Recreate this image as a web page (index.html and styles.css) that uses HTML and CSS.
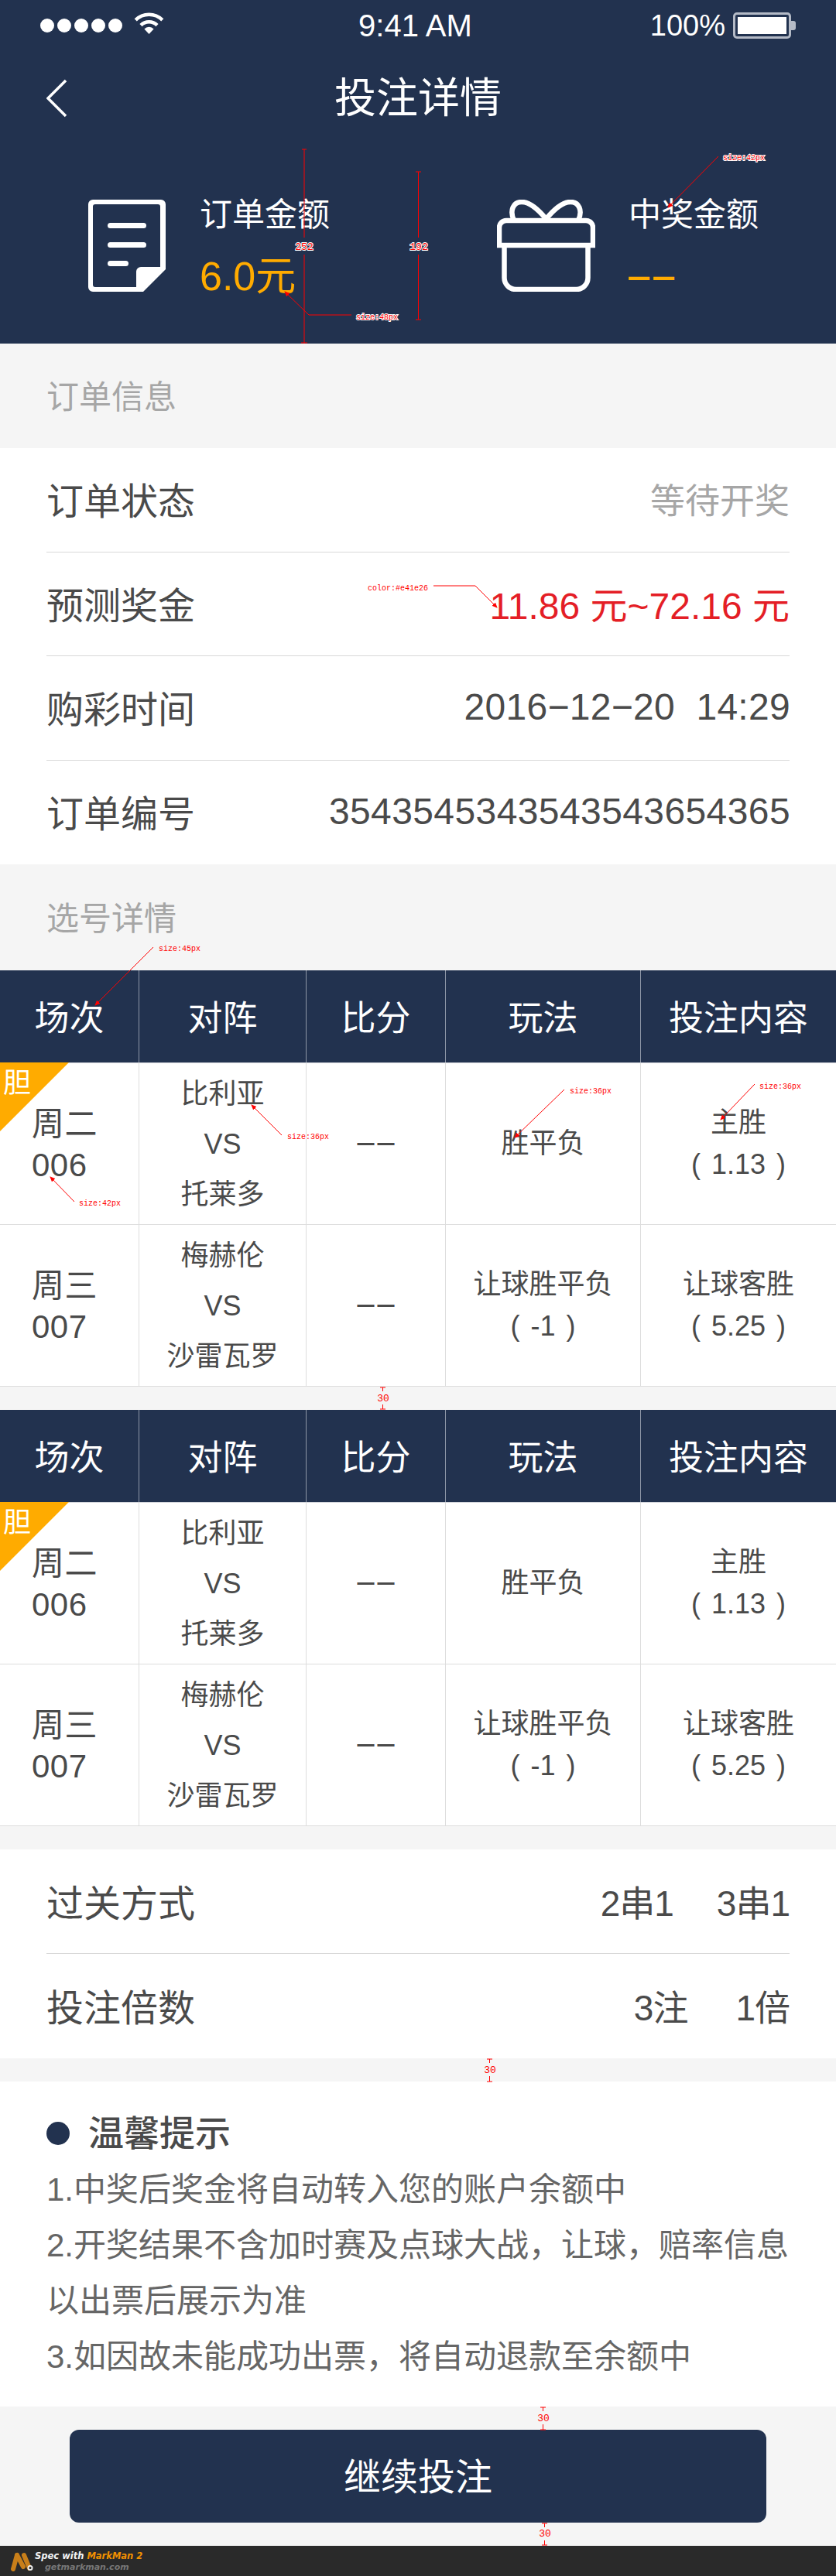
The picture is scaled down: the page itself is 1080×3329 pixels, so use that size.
FILE: index.html
```html
<!DOCTYPE html>
<html lang="zh-CN">
<head>
<meta charset="utf-8">
<title>投注详情</title>
<link rel="stylesheet" href="styles.css">
</head>
<body>
<div class="page">
  <header class="top">
    <div class="status">
      <div class="signal">
        <i class="dot"></i><i class="dot"></i><i class="dot"></i><i class="dot"></i><i class="dot"></i>
        <svg class="wifi" viewBox="0 0 41 28"><path d="M3.2 9.8a24.5 24.5 0 0 1 34.6 0" /><path d="M10 16.6a14.8 14.8 0 0 1 21 0" /><path class="wifi-core" d="M14.4 21.4a8.6 8.6 0 0 1 12.2 0L20.5 28z" /></svg>
      </div>
      <div class="clock">9:41 AM</div>
      <div class="battery-wrap">
        <span>100%</span>
        <span class="battery"><i class="battery-fill"></i></span>
        <i class="battery-cap"></i>
      </div>
    </div>
    <div class="nav">
      <svg class="back" viewBox="0 0 28 50"><path d="M25 2 2 25l23 23" /></svg>
      <h1 class="title">投注详情</h1>
    </div>
    <div class="summary">
      <div class="sum-item sum-left">
        <svg class="doc" viewBox="0 0 100 119"><path fill-rule="evenodd" d="M6 0H94a6 6 0 0 1 6 6V90L71 119H6a6 6 0 0 1-6-6V6A6 6 0 0 1 6 0ZM9 6a3 3 0 0 0-3 3V110a3 3 0 0 0 3 3H62V93a6 6 0 0 1 6-6H93V9a3 3 0 0 0-3-3Z" /><rect x="25" y="30" width="50" height="7" rx="3.5" /><rect x="25" y="55" width="50" height="7" rx="3.5" /><rect x="25" y="79" width="27" height="7" rx="3.5" /></svg>
        <div class="sum-text">
          <div class="sum-label">订单金额</div>
          <div class="sum-value">6.0元</div>
        </div>
      </div>
      <div class="sum-item sum-right">
        <svg class="gift" viewBox="0 0 127 119"><path d="M3 59V36a9 9 0 0 1 9-9H115a9 9 0 0 1 9 9V59Z" /><path d="M9.5 59V101a15 15 0 0 0 15 15H102.500a15 15 0 0 0 15-15V59" /><path d="M63.500 25C52 11 42 3 32 3C21 3 16 14 22 27" /><path d="M63.500 25C75 11 85 3 95 3C106 3 111 14 105 27" /></svg>
        <div class="sum-text">
          <div class="sum-label">中奖金额</div>
          <div class="sum-value sum-value-dash"><span class="sum-dash">——</span></div>
        </div>
      </div>
    </div>
  </header>

  <div class="sec-title">订单信息</div>
  <section class="list">
    <div class="row"><span class="row-label">订单状态</span><span class="row-val muted">等待开奖</span></div>
    <div class="row"><span class="row-label">预测奖金</span><span class="row-val red">11.86 元~72.16 元</span></div>
    <div class="row"><span class="row-label">购彩时间</span><span class="row-val num">2016−12−20&nbsp;&nbsp;14:29</span></div>
    <div class="row"><span class="row-label">订单编号</span><span class="row-val num long">3543545343543543654365</span></div>
  </section>

  <div class="sec-title sec-second">选号详情</div>

  <section class="bets">
    <div class="bet-head"><div>场次</div><div>对阵</div><div>比分</div><div>玩法</div><div>投注内容</div></div>
    <div class="bet-row">
      <div class="c-match"><span class="banker"></span><span class="banker-text">胆</span>周二<br>006</div>
      <div class="c-teams">比利亚<br>VS<br>托莱多</div>
      <div class="c-score"><span class="dash">——</span></div>
      <div>胜平负</div>
      <div>主胜<br>( 1.13 )</div>
    </div>
    <div class="bet-row">
      <div class="c-match">周三<br>007</div>
      <div class="c-teams">梅赫伦<br>VS<br>沙雷瓦罗</div>
      <div class="c-score"><span class="dash">——</span></div>
      <div>让球胜平负<br>( -1 )</div>
      <div>让球客胜<br>( 5.25 )</div>
    </div>
  </section>

  <section class="bets bets-next">
    <div class="bet-head"><div>场次</div><div>对阵</div><div>比分</div><div>玩法</div><div>投注内容</div></div>
    <div class="bet-row">
      <div class="c-match"><span class="banker"></span><span class="banker-text">胆</span>周二<br>006</div>
      <div class="c-teams">比利亚<br>VS<br>托莱多</div>
      <div class="c-score"><span class="dash">——</span></div>
      <div>胜平负</div>
      <div>主胜<br>( 1.13 )</div>
    </div>
    <div class="bet-row">
      <div class="c-match">周三<br>007</div>
      <div class="c-teams">梅赫伦<br>VS<br>沙雷瓦罗</div>
      <div class="c-score"><span class="dash">——</span></div>
      <div>让球胜平负<br>( -1 )</div>
      <div>让球客胜<br>( 5.25 )</div>
    </div>
  </section>

  <section class="list list-pass">
    <div class="row"><span class="row-label">过关方式</span><span class="row-val pair"><span>2串1</span><span>3串1</span></span></div>
    <div class="row"><span class="row-label">投注倍数</span><span class="row-val pair pair-wide"><span>3注</span><span>1倍</span></span></div>
  </section>

  <section class="tips">
    <div class="tips-title"><i class="bullet"></i>温馨提示</div>
    <p>1.中奖后奖金将自动转入您的账户余额中</p>
    <p>2.开奖结果不含加时赛及点球大战，让球，赔率信息</p>
    <p>以出票后展示为准</p>
    <p>3.如因故未能成功出票，将自动退款至余额中</p>
  </section>

  <div class="action"><button class="btn">继续投注</button></div>

  <footer class="mark">
    <svg class="mark-logo" viewBox="0 0 32 26"><path class="rod" d="M5 23 10 5" /><path class="rod" d="M10 5 18 20" /><path class="rod" d="M19 5 26 22" /><circle class="eye" cx="27" cy="21.500" r="3.500" /><circle class="pupil" cx="27" cy="21.500" r="1.500" /></svg>
    <div class="mark-text">
      <div class="mark-line">Spec with <span class="mark-name">MarkMan 2</span></div>
      <div class="mark-url">getmarkman.com</div>
    </div>
  </footer>

  <svg class="spec" viewBox="0 0 1080 3329">
    <defs><marker id="arr" markerWidth="7" markerHeight="6" refX="6" refY="3" orient="auto"><path class="arr-head" d="M0 0 7 3 0 6Z" /></marker></defs>
    <!-- header dimensions -->
    <path class="dim" d="M390 193h6M393 193V307M393 329V444M389 443h8" />
    <text class="lab lab-out lab-big mid" x="393" y="323">252</text>
    <path class="dim" d="M537 222h7M540.500 222V307M540.500 329V413M537 413h7" />
    <text class="lab lab-out lab-big mid" x="541" y="323">192</text>
    <path class="dim" marker-end="url(#arr)" d="M454 407H399L368 377" />
    <text class="lab lab-out" x="460" y="413">size:48px</text>
    <path class="dim" marker-end="url(#arr)" d="M928 202 863 268" />
    <text class="lab lab-out" x="934" y="207">size:42px</text>
    <!-- order rows -->
    <path class="dim" marker-end="url(#arr)" d="M560 757H614L642 785" />
    <text class="lab" x="475" y="763">color:#e41e26</text>
    <!-- table callouts -->
    <path class="dim" marker-end="url(#arr)" d="M198 1224 123 1299" />
    <text class="lab" x="205" y="1229">size:45px</text>
    <path class="dim" marker-end="url(#arr)" d="M364 1467 325 1428" />
    <text class="lab" x="371" y="1472">size:36px</text>
    <path class="dim" marker-end="url(#arr)" d="M729 1408 665 1470" />
    <text class="lab" x="736" y="1413">size:36px</text>
    <path class="dim" marker-end="url(#arr)" d="M975 1401 931 1447" />
    <text class="lab" x="981" y="1407">size:36px</text>
    <path class="dim" marker-end="url(#arr)" d="M96 1553 65 1521" />
    <text class="lab" x="102" y="1558">size:42px</text>
    <!-- 30px gaps -->
    <path class="dim" d="M491 1793h7M494.500 1793V1798M494.500 1815V1821M491 1821h7" />
    <text class="lab lab-num mid" x="495" y="1811">30</text>
    <path class="dim" d="M629 2661h7M632.500 2661V2666M632.500 2683V2690M629 2690h7" />
    <text class="lab lab-num mid" x="633" y="2679">30</text>
    <path class="dim" d="M698 3111h7M701.500 3111V3116M701.500 3133V3140M698 3140h7" />
    <text class="lab lab-num mid" x="702" y="3129">30</text>
    <path class="dim" d="M700 3261h7M703.500 3261V3266M703.500 3283V3289M700 3289h7" />
    <text class="lab lab-num mid" x="704" y="3278">30</text>
  </svg>
</div>
</body>
</html>
```

FILE: styles.css
```css
* { box-sizing: border-box; }
html, body { margin: 0; padding: 0; }
body {
  background: #f5f5f5;
  font-family: "Liberation Sans", "Noto Sans CJK SC", sans-serif;
  color: #4a4a4a;
}
.page { position: relative; width: 1080px; height: 3329px; overflow: hidden; display: flex; flex-direction: column; }

/* header */
.top { background: #22324f; height: 444px; color: #fff; flex: none; }
.status { height: 66px; display: flex; align-items: center; justify-content: space-between; padding: 0 52px; position: relative; }
.signal { display: flex; align-items: center; gap: 4px; }
.dot { width: 18px; height: 18px; border-radius: 50%; background: #fff; display: block; }
.wifi { width: 41px; height: 28px; margin-left: 10px; margin-top: -6px; }
.wifi path { fill: none; stroke: #fff; stroke-width: 4.500; }
.wifi .wifi-core { fill: #fff; stroke: none; }
.clock { font-size: 40px; position: absolute; left: 0; right: 7px; text-align: center; }
.battery-wrap { display: flex; align-items: center; font-size: 38px; }
.battery { width: 75px; height: 34px; margin-left: 10px; border: 3px solid #b4bac6; border-radius: 5px; padding: 3px; display: block; }
.battery-fill { display: block; height: 100%; background: #fff; }
.battery-cap { width: 6px; height: 12px; background: #b4bac6; border-radius: 0 3px 3px 0; display: block; }

.nav { height: 122px; display: flex; align-items: center; justify-content: center; position: relative; }
.back { position: absolute; left: 60px; top: 36px; width: 28px; height: 50px; fill: none; stroke: #fff; stroke-width: 3.500; }
.title { margin: 0; font-size: 54px; font-weight: 400; line-height: 70px; }

.summary { display: grid; grid-template-columns: 540px 540px; padding-top: 70px; }
.sum-item { display: flex; align-items: flex-start; }
.sum-left { padding-left: 114px; gap: 44px; }
.sum-right { padding-left: 102px; gap: 43px; }
.doc { width: 100px; height: 119px; fill: #fff; }
.gift { width: 127px; height: 119px; fill: none; stroke: #fff; stroke-width: 6.500; }
.sum-label { font-size: 42px; line-height: 40px; }
.sum-value { font-size: 52px; line-height: 46px; margin-top: 36px; color: #ffab00; }
.sum-value-dash { font-size: 27px; }
.sum-dash { display: inline-block; letter-spacing: 5px; font-weight: 700; transform: scaleY(1.6); }

/* sections */
.sec-title { height: 135px; padding: 0 0 4px 60px; display: flex; align-items: center; font-size: 42px; color: #a6a6a6; flex: none; }
.sec-second { height: 137px; }
.list { background: #fff; padding: 0 60px; flex: none; }
.row { height: 134.500px; padding-bottom: 3px; display: flex; align-items: center; justify-content: space-between; border-bottom: 1px solid #d8d8d8; }
.row:last-child { border-bottom: 0; }
.row-label { font-size: 48px; }
.row-val { font-size: 48px; }
.muted { font-size: 45px; color: #a6a6a6; }
.red { color: #e41e26; }
.num { letter-spacing: 0.300px; margin-right: -1px; }
.long { letter-spacing: 0.400px; }

/* bet tables */
.bets { flex: none; }
.bets-next { margin-top: 30px; }
.bet-head, .bet-row { display: grid; grid-template-columns: 180px 216px 180px 252px 252px; }
.bet-head { height: 120px; background: #22324f; color: #fff; font-size: 45px; border-bottom: 1px solid #cfd2d8; }
.bet-head > div { display: flex; align-items: center; justify-content: center; padding-bottom: 2px; border-right: 1px solid #8d96a6; }
.bet-head > div:last-child { border-right: 0; }
.bet-row { height: 209px; background: #fff; font-size: 36px; line-height: 54px; word-spacing: 4px; border-bottom: 1px solid #ddd; }
.bet-row > div { display: flex; align-items: center; justify-content: center; text-align: center; padding-bottom: 1px; border-right: 1px solid #ddd; }
.bet-row > div:last-child { border-right: 0; }
.bet-row > .c-match { display: block; position: relative; font-size: 42px; line-height: 53px; text-align: left; padding: 52px 0 0 41px; letter-spacing: 0.500px; }
.bet-row > .c-teams { line-height: 65px; padding-bottom: 0; }
.bet-row > .c-score { padding-bottom: 0; }
.dash { display: inline-block; font-size: 22px; line-height: 22px; letter-spacing: 4px; margin-right: -4px; font-weight: 700; transform: scaleY(1.3); }
.banker { position: absolute; left: 0; top: -1px; border-top: 89px solid #ffab00; border-right: 89px solid transparent; }
.banker-text { position: absolute; left: 4px; top: 4px; font-size: 36px; line-height: 44px; color: #fff; }

.list-pass { margin-top: 30px; }
.list-pass .row { height: 135px; }
.pair { display: flex; gap: 56px; font-size: 46px; letter-spacing: -1px; }
.pair-wide { gap: 62px; }

/* tips */
.tips { background: #fff; margin-top: 30px; padding: 40px 60px 28px; flex: none; }
.tips-title { display: flex; align-items: center; gap: 24px; font-size: 46px; line-height: 54px; margin-bottom: 10px; font-weight: 500; }
.bullet { width: 30px; height: 30px; border-radius: 50%; background: #22324f; display: block; }
.tips p { margin: 0; font-size: 42px; line-height: 72px; color: #666; }

/* action */
.action { padding: 30px 90px; flex: none; }
.btn { display: block; width: 900px; height: 120px; border: 0; border-radius: 12px; background: #22324f; color: #fff; font: inherit; font-size: 48px; padding: 0 0 6px; }

/* markman strip */
.mark { height: 39px; background: #2a2a2a; display: flex; align-items: center; padding-left: 12px; flex: none; }
.mark-logo { width: 32px; height: 26px; }
.rod { fill: none; stroke: #c97f1a; stroke-width: 6; stroke-linecap: round; }
.eye { fill: #eee; }
.pupil { fill: #222; }
.mark-text { margin-left: 1px; font-family: "DejaVu Sans", sans-serif; font-weight: 700; font-style: italic; }
.mark-line { font-size: 11.500px; line-height: 15px; color: #f2f2f2; }
.mark-name { color: #f29100; }
.mark-url { font-size: 11px; line-height: 13px; color: #777; padding-left: 13px; }

/* spec overlay */
.spec { position: absolute; left: 0; top: 0; width: 1080px; height: 3329px; pointer-events: none; }
.dim { fill: none; stroke: #f00; stroke-width: 1; }
.arr-head { fill: #f00; }
.lab { font-family: "Liberation Mono", monospace; font-size: 10px; fill: #f00; }
.lab-out { stroke: #fff; stroke-width: 2px; paint-order: stroke; }
.lab-big { font-size: 13px; }
.lab-num { font-size: 13px; }
.mid { text-anchor: middle; }
```
